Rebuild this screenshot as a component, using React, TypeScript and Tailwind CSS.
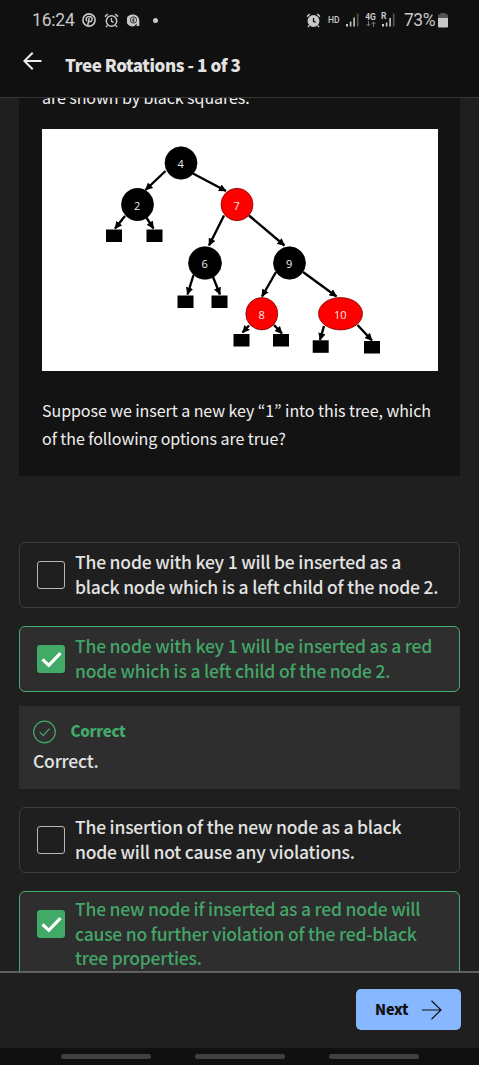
import React from "react";

const sans = "font-['Noto_Sans_CJK_KR','Noto_Sans',sans-serif]";

function AlarmIcon({ filled = false }: { filled?: boolean }) {
  return (
    <svg width="15" height="15" viewBox="0 0 15 15" fill="none" stroke="#c8c8c8">
      <circle cx="7.5" cy="8" r="5.2" strokeWidth="1.5" fill={filled ? "#c8c8c8" : "none"} />
      <path d="M7.5 5v3.4l2.2 1" strokeWidth="1.3" stroke={filled ? "#101010" : "#c8c8c8"} />
      <path d="M1 3.6 3.8 1M14 3.6 11.2 1M3.3 12.4 2 14M11.7 12.4 13 14" strokeWidth="1.5" />
    </svg>
  );
}

function Signal({ short = false }: { short?: boolean }) {
  return (
    <svg width="13" height="14" viewBox="0 0 13 14">
      <path
        d={short ? "M0 11h2v2.5H0zM3.8 9.5h1.6v4H3.8zM7.3 5h1.6v8.5H7.3z" : "M0 11h2v2.5H0zM3.8 8.5h1.6v5H3.8zM7.3 4.5h1.6v9H7.3z"}
        fill="#c8c8c8"
      />
      <path d="M10.9.5h1.6v13h-1.6z" fill="#555" />
    </svg>
  );
}

function StatusBar() {
  return (
    <div className="flex h-10 shrink-0 items-center pl-8 font-[Roboto,sans-serif] text-[#c8c8c8]">
      <span className="w-[50px] pt-px text-[17.5px] leading-none tracking-[-0.2px]">16:24</span>
      <svg width="14" height="14" viewBox="0 0 14 14" fill="none" stroke="#c8c8c8" strokeLinecap="round">
        <circle cx="7" cy="7" r="6.1" strokeWidth="1.6" />
        <path d="M4.6 7.6C3.4 5.5 4.8 3.4 7.2 3.4c2.4 0 3.5 1.8 2.7 3.8-.6 1.6-2 1.9-2.7 1M7.1 5.6 5.8 12" strokeWidth="1.5" />
      </svg>
      <div className="ml-2">
        <AlarmIcon />
      </div>
      <svg className="ml-2" width="13" height="13" viewBox="0 0 13 13">
        <path d="M6.3.5a6 6 0 0 1 6 6V12H9.6V9.5L7.6 12A6 6 0 1 1 6.3.5Z" fill="#c8c8c8" />
        <circle cx="6.5" cy="6" r="3.2" fill="none" stroke="#222" strokeWidth=".8" />
        <path d="M5.1 7.5 8 4.4M4.7 5.5l3 2M6.4 3.5v5" stroke="#222" strokeWidth=".7" />
      </svg>
      <i className="ml-[13px] size-[5px] rounded-full bg-[#c8c8c8]" />
      <div className="ml-[148px]">
        <AlarmIcon filled />
      </div>
      <span className="ml-[7px] w-[18px] text-[8.5px] font-medium leading-none">HD</span>
      <Signal />
      <div className="ml-[5px] flex w-[13px] flex-col items-center">
        <span className="text-[8.5px] font-bold leading-[8px]">4G</span>
        <svg width="10" height="6" viewBox="0 0 10 6" fill="none" stroke="#777">
          <path d="M2.5 0v5M.5 3l2 2 2-2M7.5 6V1M5.5 3l2-2 2 2" />
        </svg>
      </div>
      <div className="relative ml-[5px]">
        <Signal short />
        <span className="absolute -left-[1px] -top-px text-[8.5px] font-bold leading-[8px]">R</span>
      </div>
      <span className="ml-[9px] w-[34px] pt-px text-[17.5px] leading-none tracking-[-0.5px]">73%</span>
      <svg width="10" height="15" viewBox="0 0 10 15">
        <path d="M2.5 0h5v1.5H10v4H0v-4h2.5z" fill="#555" />
        <path d="M0 5h10v8.5q0 1-1 1H1q-1 0-1-1z" fill="#c8c8c8" />
      </svg>
    </div>
  );
}

type Node = { x: number; y: number; rx: number; label: string; red?: boolean };

const nodes: Node[] = [
  { x: 139, y: 34, rx: 16, label: "4" },
  { x: 95.5, y: 75.5, rx: 16, label: "2" },
  { x: 195, y: 75.5, rx: 16, label: "7", red: true },
  { x: 163, y: 134, rx: 16.5, label: "6" },
  { x: 247.5, y: 134, rx: 16, label: "9" },
  { x: 219.8, y: 184.7, rx: 16, label: "8", red: true },
  { x: 298.5, y: 184.7, rx: 22, label: "10", red: true },
];

const edges: number[][] = [
  [123.5, 42, 103.5, 61],
  [151, 44.5, 184, 62],
  [83, 87, 73, 99.5],
  [104, 88, 111.5, 99.5],
  [182, 86.5, 167, 116.5],
  [207, 86.5, 242.5, 116.5],
  [151.5, 146, 145.5, 165.5],
  [171, 148, 178, 165.5],
  [234, 143, 220, 167.5],
  [261, 143, 294.5, 167.5],
  [207, 196.5, 200.5, 203.5],
  [232, 196, 240, 204.5],
  [282, 197, 278, 211],
  [315.5, 196, 330, 211.5],
];

const leaves: number[][] = [
  [64, 100.5], [104.5, 100.5], [135.5, 166.5], [169.5, 166.5],
  [191.5, 205], [231, 205], [270.7, 211.3], [322, 212],
];

function TreeDiagram() {
  return (
    <svg className="block bg-white" width="396" height="242" viewBox="0 0 396 242">
      <defs>
        <marker id="arrow" viewBox="0 0 7 7" refX="6.5" refY="3.5" markerWidth="7.5" markerHeight="7.5" markerUnits="userSpaceOnUse" orient="auto">
          <path d="M0 0 7 3.5 0 7z" />
        </marker>
      </defs>
      {edges.map(([x1, y1, x2, y2]) => (
        <line key={`${x1}-${y1}`} x1={x1} y1={y1} x2={x2} y2={y2} stroke="#000" strokeWidth="2.4" markerEnd="url(#arrow)" />
      ))}
      {leaves.map(([x, y]) => (
        <rect key={`${x}-${y}`} x={x} y={y} width="16" height="12.5" />
      ))}
      {nodes.map((n) => (
        <g key={n.label}>
          <ellipse cx={n.x} cy={n.y} rx={n.rx} ry="16.2" fill={n.red ? "#fe0000" : "#000"} stroke={n.red ? "#650000" : "#000"} strokeWidth=".7" />
          <text x={n.x - 0.3} y={n.y + 5.3} textAnchor="middle" fill="#eee" fontFamily="Open Sans, sans-serif" fontSize="11">
            {n.label}
          </text>
        </g>
      ))}
    </svg>
  );
}

type OptionProps = { lines: string[]; checked?: boolean; className: string; textClass?: string };

function Option({ lines, checked = false, className, textClass = "pt-[7px]" }: OptionProps) {
  return (
    <label
      className={`flex shrink-0 rounded-md border pl-[17px] ${
        checked ? "border-[#46ae6c] bg-[#2e2e2e] text-[#43a567]" : "border-[#3d3d3d] text-[#e2e2e2]"
      } ${className}`}
    >
      <span
        className={`mt-[18px] flex size-[28px] shrink-0 items-center justify-center rounded-[3px] ${
          checked ? "bg-[#41aa66]" : "border border-[#b8b8b8]"
        }`}
      >
        {checked && (
          <svg width="21" height="17" viewBox="0 0 21 17" fill="none">
            <path d="m1.5 8.3 6.3 6L19.5 2.2" stroke="#fff" strokeWidth="3.2" />
          </svg>
        )}
      </span>
      <span className={`ml-[10px] text-[17.5px] font-medium leading-[24.7px] tracking-[-0.2px] whitespace-nowrap ${textClass}`}>
        {lines.map((line) => (
          <span key={line} className="block">
            {line}
          </span>
        ))}
      </span>
    </label>
  );
}

export default function App() {
  return (
    <div className={`flex h-[1065px] w-[479px] flex-col overflow-hidden bg-[#1f1f1f] ${sans}`}>
      <header className="flex h-[98px] shrink-0 flex-col border-b border-[#363636] bg-[#101010]">
        <StatusBar />
        <div className="flex pl-[23px]">
          <svg className="mt-3" width="19" height="18" viewBox="0 0 19 18" fill="none" stroke="#eee" strokeWidth="2">
            <path d="M18.5 9H1.5M9.7.7 1.4 9l8.3 8.3" />
          </svg>
          <h1 className="ml-[23px] mt-[11px] text-[17px] font-black leading-7 tracking-[-0.42px] text-[#e2e2e2]">Tree Rotations - 1 of 3</h1>
        </div>
      </header>

      <main className="flex h-[873px] shrink-0 flex-col overflow-hidden px-[19px]">
        <section className="h-[378px] shrink-0 overflow-hidden bg-[#131313] pl-[23px] text-[16px] leading-7 tracking-[-0.06px] text-[#f0f0f0]">
          <p className="-mt-[15px] h-[46px] whitespace-nowrap">are shown by black squares.</p>
          <TreeDiagram />
          <p className="mt-[25px] whitespace-nowrap">
            Suppose we insert a new key “1” into this tree, which
            <br />
            of the following options are true?
          </p>
        </section>

        <Option className="mt-[66px] h-[66px]" lines={["The node with key 1 will be inserted as a", "black node which is a left child of the node 2."]} />
        <Option checked className="mt-[18px] h-[66px]" lines={["The node with key 1 will be inserted as a red", "node which is a left child of the node 2."]} />

        <section className="mt-[14px] h-[83px] shrink-0 bg-[#2e2e2e] pl-[14px] pt-[14px]">
          <div className="flex h-6 items-center">
            <svg width="24" height="24" viewBox="0 0 24 24" fill="none" stroke="#43aa69">
              <circle cx="11.5" cy="12" r="10.8" strokeWidth="1.2" />
              <path d="m6.7 12.2 3.5 3.5 6.3-7" strokeWidth="1.2" />
            </svg>
            <span className="-mt-0.5 ml-[13.5px] text-[15px] font-black leading-6 tracking-[-0.25px] text-[#43aa69]">Correct</span>
          </div>
          <p className="mt-[5px] text-[17.5px] font-medium leading-6 tracking-[-0.21px] text-[#e2e2e2]">Correct.</p>
        </section>

        <Option className="mt-[18px] h-[66px]" lines={["The insertion of the new node as a black", "node will not cause any violations."]} />
        <Option checked className="mt-[18px] h-[92px]" textClass="pt-[5px]" lines={["The new node if inserted as a red node will", "cause no further violation of the red-black", "tree properties."]} />
      </main>

      <footer className="flex h-[77px] shrink-0 justify-end border-t-2 border-[#606060] pr-[18px] pt-4">
        <button className="flex h-[41px] w-[105px] items-center rounded-[5px] bg-[#87b7ff] pl-[19px] text-[14.5px] font-black tracking-[-0.2px] text-[#111]">
          <span className="-mt-0.5">Next</span>
          <svg className="ml-[14px]" width="20" height="20" viewBox="0 0 20 20" fill="none" stroke="#111" strokeWidth="1.2">
            <path d="M0 10h19M9.5.8 19 10l-9.5 9.2" />
          </svg>
        </button>
      </footer>
      <nav className="flex h-[17px] shrink-0 justify-center gap-[44px] bg-[#101010] pt-1.5">
        <i className="h-[5px] w-[90px] rounded-full bg-[#414141]" />
        <i className="h-[5px] w-[90px] rounded-full bg-[#414141]" />
        <i className="h-[5px] w-[90px] rounded-full bg-[#414141]" />
      </nav>
    </div>
  );
}
